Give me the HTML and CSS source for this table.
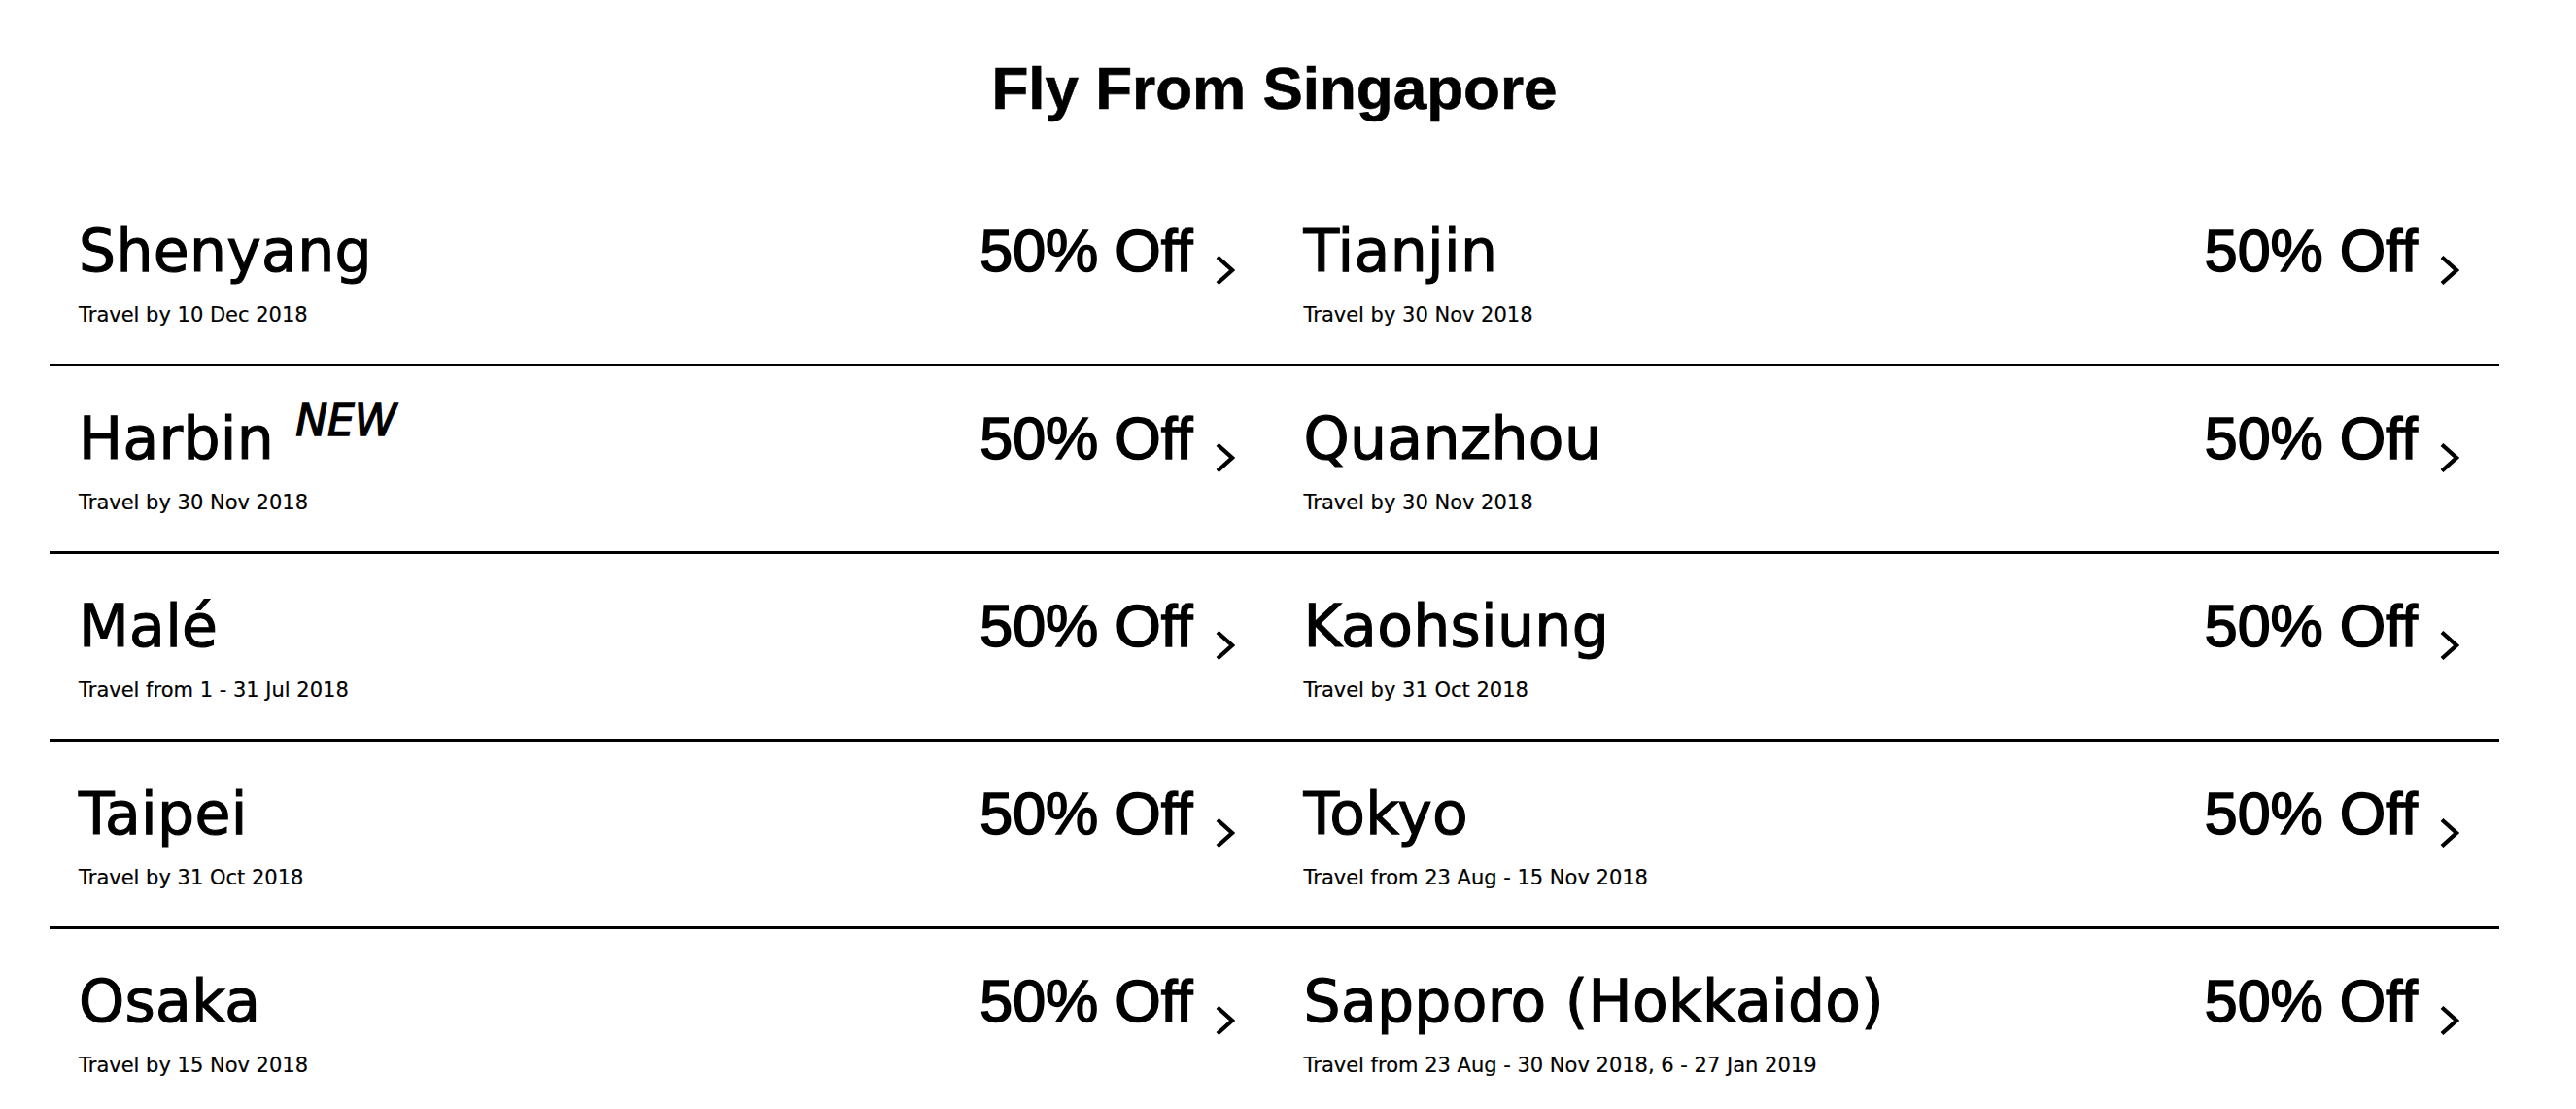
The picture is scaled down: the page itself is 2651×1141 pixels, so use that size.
FILE: index.html
```html
<!DOCTYPE html>
<html lang="en">
<head>
<meta charset="utf-8">
<title>Fly From Singapore</title>
<link rel="stylesheet" href="styles.css">
</head>
<body>
<main class="page">
  <h1 class="title">Fly From Singapore</h1>
  <div class="deals">
    <a class="deal" href="#">
      <div class="deal-main"><span class="city">Shenyang</span><span class="offer"><span class="pct">50% Off</span><svg class="chev" viewBox="0 0 20 30" width="20" height="30"><polyline points="2,1.5 17,15 2,28.5"/></svg></span></div>
      <div class="period">Travel by 10 Dec 2018</div>
    </a>
    <a class="deal" href="#">
      <div class="deal-main"><span class="city">Tianjin</span><span class="offer"><span class="pct">50% Off</span><svg class="chev" viewBox="0 0 20 30" width="20" height="30"><polyline points="2,1.5 17,15 2,28.5"/></svg></span></div>
      <div class="period">Travel by 30 Nov 2018</div>
    </a>
    <a class="deal" href="#">
      <div class="deal-main"><span class="city">Harbin<span class="new">NEW</span></span><span class="offer"><span class="pct">50% Off</span><svg class="chev" viewBox="0 0 20 30" width="20" height="30"><polyline points="2,1.5 17,15 2,28.5"/></svg></span></div>
      <div class="period">Travel by 30 Nov 2018</div>
    </a>
    <a class="deal" href="#">
      <div class="deal-main"><span class="city">Quanzhou</span><span class="offer"><span class="pct">50% Off</span><svg class="chev" viewBox="0 0 20 30" width="20" height="30"><polyline points="2,1.5 17,15 2,28.5"/></svg></span></div>
      <div class="period">Travel by 30 Nov 2018</div>
    </a>
    <a class="deal" href="#">
      <div class="deal-main"><span class="city">Malé</span><span class="offer"><span class="pct">50% Off</span><svg class="chev" viewBox="0 0 20 30" width="20" height="30"><polyline points="2,1.5 17,15 2,28.5"/></svg></span></div>
      <div class="period">Travel from 1 - 31 Jul 2018</div>
    </a>
    <a class="deal" href="#">
      <div class="deal-main"><span class="city">Kaohsiung</span><span class="offer"><span class="pct">50% Off</span><svg class="chev" viewBox="0 0 20 30" width="20" height="30"><polyline points="2,1.5 17,15 2,28.5"/></svg></span></div>
      <div class="period">Travel by 31 Oct 2018</div>
    </a>
    <a class="deal" href="#">
      <div class="deal-main"><span class="city">Taipei</span><span class="offer"><span class="pct">50% Off</span><svg class="chev" viewBox="0 0 20 30" width="20" height="30"><polyline points="2,1.5 17,15 2,28.5"/></svg></span></div>
      <div class="period">Travel by 31 Oct 2018</div>
    </a>
    <a class="deal" href="#">
      <div class="deal-main"><span class="city">Tokyo</span><span class="offer"><span class="pct">50% Off</span><svg class="chev" viewBox="0 0 20 30" width="20" height="30"><polyline points="2,1.5 17,15 2,28.5"/></svg></span></div>
      <div class="period">Travel from 23 Aug - 15 Nov 2018</div>
    </a>
    <a class="deal" href="#">
      <div class="deal-main"><span class="city">Osaka</span><span class="offer"><span class="pct">50% Off</span><svg class="chev" viewBox="0 0 20 30" width="20" height="30"><polyline points="2,1.5 17,15 2,28.5"/></svg></span></div>
      <div class="period">Travel by 15 Nov 2018</div>
    </a>
    <a class="deal" href="#">
      <div class="deal-main"><span class="city">Sapporo (Hokkaido)</span><span class="offer"><span class="pct">50% Off</span><svg class="chev" viewBox="0 0 20 30" width="20" height="30"><polyline points="2,1.5 17,15 2,28.5"/></svg></span></div>
      <div class="period">Travel from 23 Aug - 30 Nov 2018, 6 - 27 Jan 2019</div>
    </a>
  </div>
</main>
</body>
</html>
```

FILE: styles.css
```css
html, body {
  margin: 0;
  padding: 0;
  background: #ffffff;
  color: #000000;
  overflow: hidden;
}

.page {
  width: 2521px;
  margin-left: 51px;
}

.title {
  margin: 60px 0 62px;
  font-family: "Liberation Sans", Arial, sans-serif;
  font-weight: 700;
  font-size: 62px;
  line-height: 62px;
  text-align: center;
  -webkit-text-stroke: 0.6px #000;
}

.deals {
  display: grid;
  grid-template-columns: 1fr 1fr;
}

.deal {
  display: block;
  padding: 44px 41px 39px 30px;
  border-bottom: 3px solid #000;
  color: #000;
  text-decoration: none;
}

.deal:nth-last-child(-n+2) {
  border-bottom: none;
  padding-bottom: 0;
}

.deal-main {
  display: flex;
  justify-content: space-between;
  align-items: baseline;
}

.city {
  font-family: "DejaVu Sans", sans-serif;
  font-size: 60px;
  line-height: 60px;
  letter-spacing: 0.3px;
  white-space: nowrap;
  -webkit-text-stroke: 1.1px #000;
}

.new {
  font-style: italic;
  font-size: 44px;
  line-height: 0;
  letter-spacing: 0;
  vertical-align: 24px;
  margin-left: 22px;
  -webkit-text-stroke: 1.3px #000;
}

.offer {
  display: block;
  white-space: nowrap;
}

.pct {
  font-family: "Liberation Sans", Arial, sans-serif;
  font-size: 61px;
  line-height: 60px;
  -webkit-text-stroke: 1.6px #000;
}

.chev {
  vertical-align: baseline;
  margin-left: 23px;
  margin-bottom: -14px;
  fill: none;
  stroke: #000;
  stroke-width: 4.2;
}

.period {
  margin-top: 26px;
  font-family: "DejaVu Sans", sans-serif;
  font-size: 21px;
  line-height: 21px;
  -webkit-text-stroke: 0.2px #000;
}
```
